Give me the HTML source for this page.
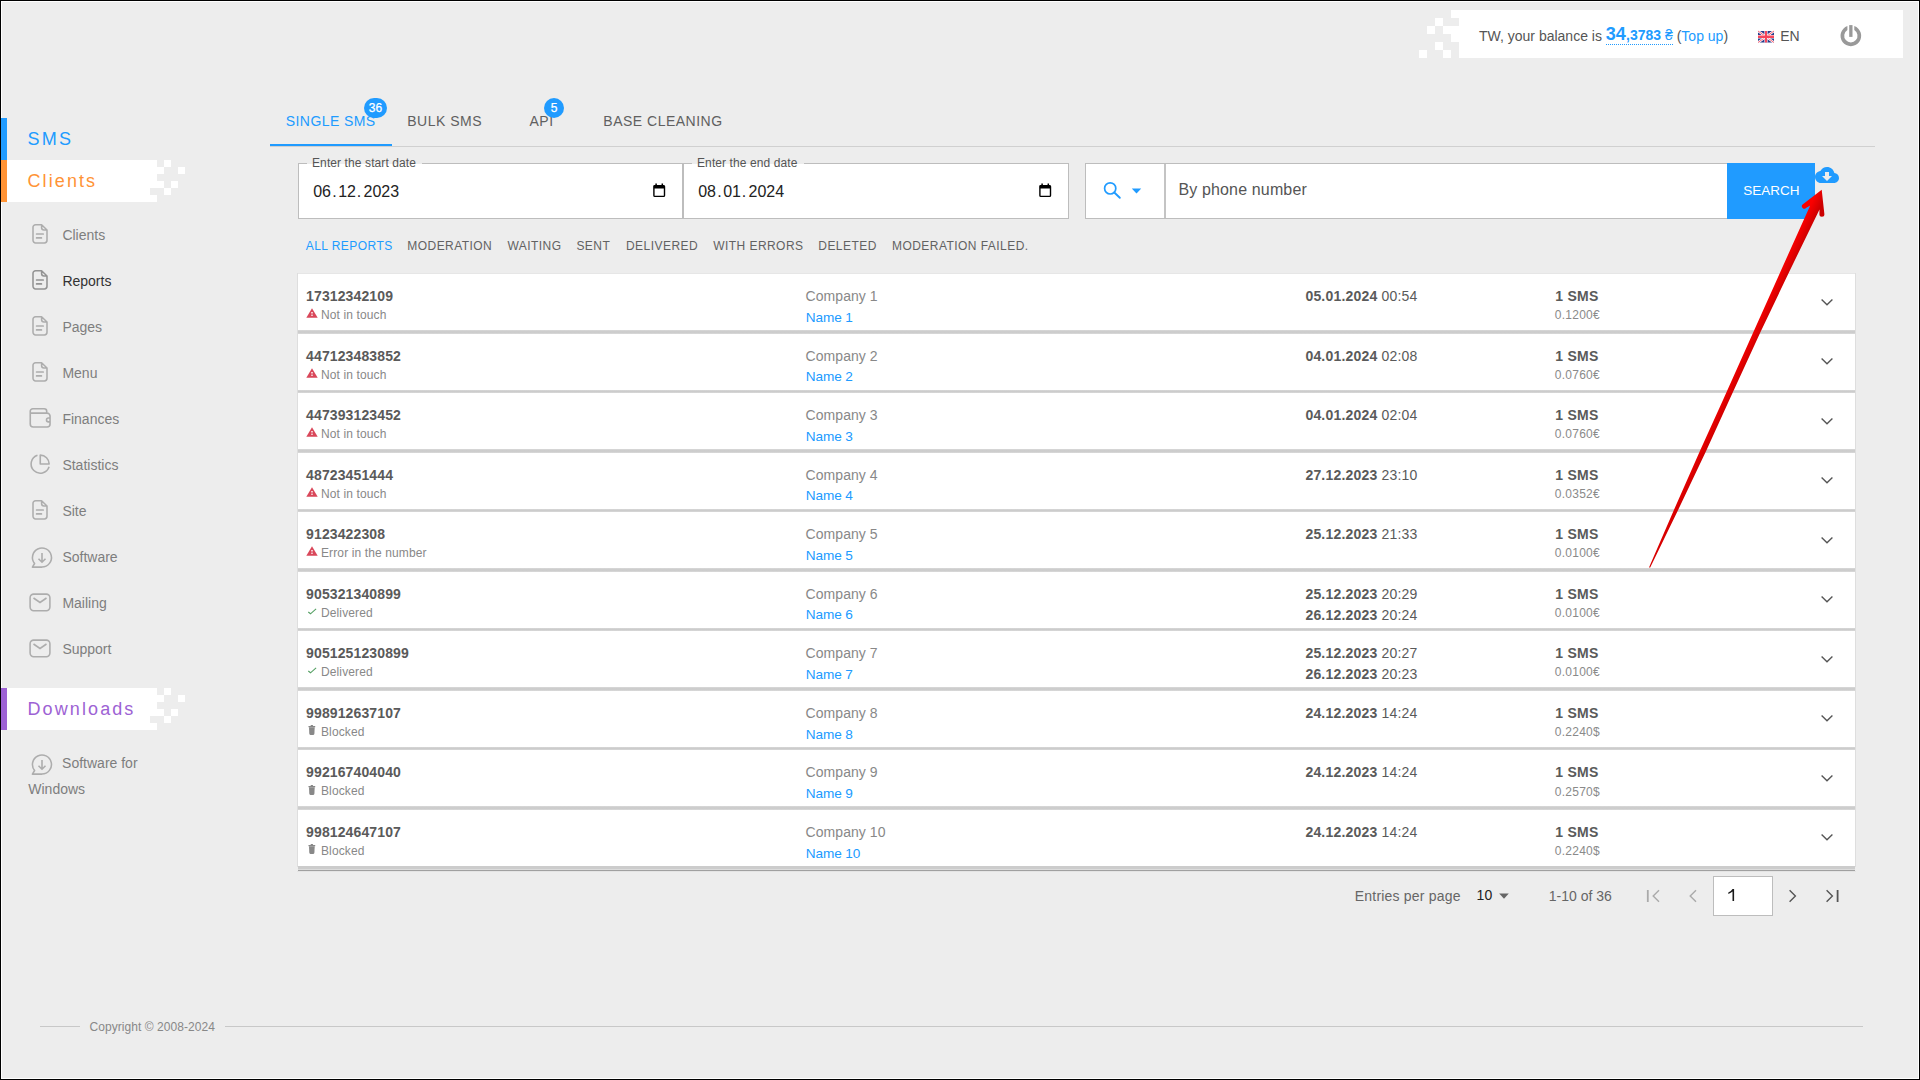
<!DOCTYPE html>
<html><head><meta charset="utf-8"><title>Reports</title>
<style>
*{box-sizing:border-box;margin:0;padding:0}
html,body{width:1920px;height:1080px;overflow:hidden;background:#000}
body{font-family:"Liberation Sans",sans-serif;position:relative}
.t{position:absolute;white-space:nowrap}
.r{position:absolute}
svg{position:absolute;overflow:visible}
</style></head><body>
<div class="r" style="left:1px;top:1px;width:1918px;height:1078px;background:#fff;"></div>
<div class="r" style="left:2px;top:2px;width:1916px;height:1076px;background:#ededed;"></div>
<div class="r" style="left:1459px;top:10px;width:444px;height:48px;background:#fff;"></div>
<div class="r" style="left:1451px;top:10px;width:8px;height:8px;background:#fff;"></div>
<div class="r" style="left:1435px;top:18px;width:8px;height:8px;background:#fff;"></div>
<div class="r" style="left:1427px;top:26px;width:8px;height:8px;background:#fff;"></div>
<div class="r" style="left:1443px;top:26px;width:8px;height:8px;background:#fff;"></div>
<div class="r" style="left:1451px;top:26px;width:8px;height:8px;background:#fff;"></div>
<div class="r" style="left:1451px;top:34px;width:8px;height:8px;background:#fff;"></div>
<div class="r" style="left:1435px;top:42px;width:8px;height:8px;background:#fff;"></div>
<div class="r" style="left:1419px;top:50px;width:8px;height:8px;background:#fff;"></div>
<div class="r" style="left:1443px;top:50px;width:8px;height:8px;background:#fff;"></div>
<div class="t" style="left:1479.00px;top:28.95px;font-size:14px;line-height:14px;color:#555;">TW, your balance is</div>
<div class="r" style="left:1606px;top:44px;width:67px;height:0;border-top:1px dotted rgb(32,155,255)"></div>
<div class="t" style="left:1605.80px;top:24.76px;font-size:18px;line-height:18px;color:rgb(32,155,255);font-weight:bold">34</div>
<div class="t" style="left:1626.00px;top:28.15px;font-size:14px;line-height:14px;color:rgb(32,155,255);font-weight:bold">,3783 <span style="font-weight:normal">₴</span></div>
<div class="t" style="left:1676.70px;top:28.95px;font-size:14px;line-height:14px;color:#555;">(<span style="color:rgb(32,155,255)">Top up</span>)</div>
<svg style="left:1758px;top:31.3px" width="16" height="11.5" viewBox="0 0 60 40" preserveAspectRatio="none">
<rect width="60" height="40" fill="#283c8c"/>
<path d="M0,0 L60,40 M60,0 L0,40" stroke="#fff" stroke-width="8"/>
<path d="M0,0 L60,40 M60,0 L0,40" stroke="#f5455a" stroke-width="3"/>
<path d="M30,0 V40 M0,20 H60" stroke="#fff" stroke-width="12"/>
<path d="M30,0 V40 M0,20 H60" stroke="#f5455a" stroke-width="8"/>
</svg>
<div class="t" style="left:1780.20px;top:28.95px;font-size:14px;line-height:14px;color:#555;">EN</div>
<svg style="left:1840px;top:25px" width="22" height="22" viewBox="0 0 22 22">
<path d="M7.4 1.04 A10.35 10.35 0 1 0 14.3 1.04 L14.3 5.12 A6.65 6.65 0 1 1 7.4 5.12 Z" fill="#999"/>
<rect x="9.2" y="0.1" width="3.3" height="11.8" fill="#999"/>
</svg>
<div class="r" style="left:1px;top:118px;width:6px;height:42px;background:rgb(32,155,255);"></div>
<div class="t" style="left:27.50px;top:129.76px;font-size:18px;line-height:18px;color:rgb(32,155,255);letter-spacing:2.3px">SMS</div>
<div class="r" style="left:7px;top:160px;width:143px;height:42px;background:#fff;"></div>
<div class="r" style="left:150px;top:160px;width:7px;height:7px;background:#fff;"></div>
<div class="r" style="left:164px;top:160px;width:7px;height:7px;background:#fff;"></div>
<div class="r" style="left:150px;top:167px;width:7px;height:7px;background:#fff;"></div>
<div class="r" style="left:157px;top:167px;width:7px;height:7px;background:#fff;"></div>
<div class="r" style="left:178px;top:167px;width:7px;height:7px;background:#fff;"></div>
<div class="r" style="left:150px;top:174px;width:7px;height:7px;background:#fff;"></div>
<div class="r" style="left:150px;top:181px;width:7px;height:7px;background:#fff;"></div>
<div class="r" style="left:157px;top:181px;width:7px;height:7px;background:#fff;"></div>
<div class="r" style="left:171px;top:181px;width:7px;height:7px;background:#fff;"></div>
<div class="r" style="left:164px;top:188px;width:7px;height:7px;background:#fff;"></div>
<div class="r" style="left:150px;top:195px;width:7px;height:7px;background:#fff;"></div>
<div class="r" style="left:1px;top:160px;width:6px;height:42px;background:#ff9335;"></div>
<div class="t" style="left:27.50px;top:171.76px;font-size:18px;line-height:18px;color:#ff9335;letter-spacing:2.1px">Clients</div>
<div class="r" style="left:7px;top:688px;width:143px;height:42px;background:#fff;"></div>
<div class="r" style="left:150px;top:688px;width:7px;height:7px;background:#fff;"></div>
<div class="r" style="left:164px;top:688px;width:7px;height:7px;background:#fff;"></div>
<div class="r" style="left:150px;top:695px;width:7px;height:7px;background:#fff;"></div>
<div class="r" style="left:157px;top:695px;width:7px;height:7px;background:#fff;"></div>
<div class="r" style="left:178px;top:695px;width:7px;height:7px;background:#fff;"></div>
<div class="r" style="left:150px;top:702px;width:7px;height:7px;background:#fff;"></div>
<div class="r" style="left:150px;top:709px;width:7px;height:7px;background:#fff;"></div>
<div class="r" style="left:157px;top:709px;width:7px;height:7px;background:#fff;"></div>
<div class="r" style="left:171px;top:709px;width:7px;height:7px;background:#fff;"></div>
<div class="r" style="left:164px;top:716px;width:7px;height:7px;background:#fff;"></div>
<div class="r" style="left:150px;top:723px;width:7px;height:7px;background:#fff;"></div>
<div class="r" style="left:1px;top:688px;width:6px;height:42px;background:#9d62d4;"></div>
<div class="t" style="left:27.50px;top:699.76px;font-size:18px;line-height:18px;color:#9d62d4;letter-spacing:2.1px">Downloads</div>
<div class="t" style="left:62.40px;top:228.15px;font-size:14px;line-height:14px;color:#7e7e7e;">Clients</div>
<svg style="left:31px;top:223px" width="18" height="22" viewBox="0 0 18 22"><path d="M4.6 1.7 H10.6 L16 7.0 V17.3 A2.6 2.6 0 0 1 13.4 19.9 H4.6 A2.6 2.6 0 0 1 2 17.3 V4.3 A2.6 2.6 0 0 1 4.6 1.7 Z M10.6 1.7 V4.5 A2.4 2.4 0 0 0 13 6.9 H16" fill="none" stroke="#adadad" stroke-width="1.55" stroke-linejoin="round"/><path d="M5.6 11 H12.2 M5.6 14.9 H10.4" stroke="#adadad" stroke-width="1.7" stroke-linecap="round"/></svg>
<div class="t" style="left:62.40px;top:274.15px;font-size:14px;line-height:14px;color:#333;">Reports</div>
<svg style="left:31px;top:269px" width="18" height="22" viewBox="0 0 18 22"><path d="M4.6 1.7 H10.6 L16 7.0 V17.3 A2.6 2.6 0 0 1 13.4 19.9 H4.6 A2.6 2.6 0 0 1 2 17.3 V4.3 A2.6 2.6 0 0 1 4.6 1.7 Z M10.6 1.7 V4.5 A2.4 2.4 0 0 0 13 6.9 H16" fill="none" stroke="#939393" stroke-width="1.55" stroke-linejoin="round"/><path d="M5.6 11 H12.2 M5.6 14.9 H10.4" stroke="#939393" stroke-width="1.7" stroke-linecap="round"/></svg>
<div class="t" style="left:62.40px;top:320.15px;font-size:14px;line-height:14px;color:#7e7e7e;">Pages</div>
<svg style="left:31px;top:315px" width="18" height="22" viewBox="0 0 18 22"><path d="M4.6 1.7 H10.6 L16 7.0 V17.3 A2.6 2.6 0 0 1 13.4 19.9 H4.6 A2.6 2.6 0 0 1 2 17.3 V4.3 A2.6 2.6 0 0 1 4.6 1.7 Z M10.6 1.7 V4.5 A2.4 2.4 0 0 0 13 6.9 H16" fill="none" stroke="#adadad" stroke-width="1.55" stroke-linejoin="round"/><path d="M5.6 11 H12.2 M5.6 14.9 H10.4" stroke="#adadad" stroke-width="1.7" stroke-linecap="round"/></svg>
<div class="t" style="left:62.40px;top:366.15px;font-size:14px;line-height:14px;color:#7e7e7e;">Menu</div>
<svg style="left:31px;top:361px" width="18" height="22" viewBox="0 0 18 22"><path d="M4.6 1.7 H10.6 L16 7.0 V17.3 A2.6 2.6 0 0 1 13.4 19.9 H4.6 A2.6 2.6 0 0 1 2 17.3 V4.3 A2.6 2.6 0 0 1 4.6 1.7 Z M10.6 1.7 V4.5 A2.4 2.4 0 0 0 13 6.9 H16" fill="none" stroke="#adadad" stroke-width="1.55" stroke-linejoin="round"/><path d="M5.6 11 H12.2 M5.6 14.9 H10.4" stroke="#adadad" stroke-width="1.7" stroke-linecap="round"/></svg>
<div class="t" style="left:62.40px;top:412.15px;font-size:14px;line-height:14px;color:#7e7e7e;">Finances</div>
<svg style="left:29px;top:407px" width="23" height="22" viewBox="0 0 23 22"><path d="M1.25 6.1 V4.3 A2.55 2.55 0 0 1 3.8 1.75 H15.2 A2.5 2.5 0 0 1 17.7 4.25 V6.1 M1.25 4.3 V17.05 A3 3 0 0 0 4.25 20.05 H18.05 A3 3 0 0 0 21.05 17.05 V9.1 A3 3 0 0 0 18.05 6.1 H1.25 M21.05 11 H19.45 A1.95 1.95 0 0 0 19.45 14.9 H21.05" fill="none" stroke="#adadad" stroke-width="1.6" stroke-linejoin="round"/></svg>
<div class="t" style="left:62.40px;top:458.15px;font-size:14px;line-height:14px;color:#7e7e7e;">Statistics</div>
<svg style="left:29px;top:453px" width="22" height="22" viewBox="0 0 22 22"><path d="M8.46 2.25 A9.2 9.2 0 1 0 20.08 13.75" fill="none" stroke="#adadad" stroke-width="1.6"/><path d="M11.25 2.15 V11.05 H20.15 A8.9 8.9 0 0 0 11.25 2.15 Z" fill="none" stroke="#adadad" stroke-width="1.6" stroke-linejoin="round"/></svg>
<div class="t" style="left:62.40px;top:504.15px;font-size:14px;line-height:14px;color:#7e7e7e;">Site</div>
<svg style="left:31px;top:499px" width="18" height="22" viewBox="0 0 18 22"><path d="M4.6 1.7 H10.6 L16 7.0 V17.3 A2.6 2.6 0 0 1 13.4 19.9 H4.6 A2.6 2.6 0 0 1 2 17.3 V4.3 A2.6 2.6 0 0 1 4.6 1.7 Z M10.6 1.7 V4.5 A2.4 2.4 0 0 0 13 6.9 H16" fill="none" stroke="#adadad" stroke-width="1.55" stroke-linejoin="round"/><path d="M5.6 11 H12.2 M5.6 14.9 H10.4" stroke="#adadad" stroke-width="1.7" stroke-linecap="round"/></svg>
<div class="t" style="left:62.40px;top:550.15px;font-size:14px;line-height:14px;color:#7e7e7e;">Software</div>
<svg style="left:31px;top:547px" width="23" height="23" viewBox="0 0 23 23"><path d="M11 20 A9.5 9.5 0 1 0 3.6 16.5 L1.4 20.1 H11 Z" fill="none" stroke="#adadad" stroke-width="1.55" stroke-linejoin="round"/><path d="M11 6 V15 M7.5 11.7 L11 15.2 L14.5 11.7" fill="none" stroke="#adadad" stroke-width="1.6"/></svg>
<div class="t" style="left:62.40px;top:596.15px;font-size:14px;line-height:14px;color:#7e7e7e;">Mailing</div>
<svg style="left:29px;top:592.8px" width="22" height="19" viewBox="0 0 22 19"><rect x="1.1" y="1.1" width="19.8" height="16.6" rx="3.6" fill="none" stroke="#adadad" stroke-width="1.55"/><path d="M4.5 5 L11 9.5 L17.5 5" fill="none" stroke="#adadad" stroke-width="1.55"/></svg>
<div class="t" style="left:62.40px;top:642.15px;font-size:14px;line-height:14px;color:#7e7e7e;">Support</div>
<svg style="left:29px;top:638.8px" width="22" height="19" viewBox="0 0 22 19"><rect x="1.1" y="1.1" width="19.8" height="16.6" rx="3.6" fill="none" stroke="#adadad" stroke-width="1.55"/><path d="M4.5 5 L11 9.5 L17.5 5" fill="none" stroke="#adadad" stroke-width="1.55"/></svg>
<div class="t" style="left:62.10px;top:755.95px;font-size:14px;line-height:14px;color:#7e7e7e;">Software for</div>
<div class="t" style="left:28.30px;top:782.45px;font-size:14px;line-height:14px;color:#7e7e7e;">Windows</div>
<svg style="left:31px;top:753.7px" width="23" height="23" viewBox="0 0 23 23"><path d="M11 20 A9.5 9.5 0 1 0 3.6 16.5 L1.4 20.1 H11 Z" fill="none" stroke="#adadad" stroke-width="1.55" stroke-linejoin="round"/><path d="M11 6 V15 M7.5 11.7 L11 15.2 L14.5 11.7" fill="none" stroke="#adadad" stroke-width="1.6"/></svg>
<div class="r" style="left:270px;top:146px;width:1605px;height:1px;background:#d0d0d0;"></div>
<div class="r" style="left:270px;top:144px;width:122px;height:2px;background:rgb(32,155,255);"></div>
<div class="t" style="left:285.80px;top:113.85px;font-size:14px;line-height:14px;color:rgb(32,155,255);letter-spacing:0.42px">SINGLE SMS</div>
<div class="t" style="left:407.20px;top:113.85px;font-size:14px;line-height:14px;color:#606060;letter-spacing:0.5px">BULK SMS</div>
<div class="t" style="left:529.50px;top:113.85px;font-size:14px;line-height:14px;color:#606060;letter-spacing:0.5px">API</div>
<div class="t" style="left:603.30px;top:113.85px;font-size:14px;line-height:14px;color:#606060;letter-spacing:0.5px">BASE CLEANING</div>
<div class="r" style="left:364px;top:98px;width:23px;height:20px;border-radius:10px;background:rgb(32,155,255)"></div>
<div class="t" style="left:364px;top:98px;width:23px;height:20px;line-height:20px;text-align:center;font-size:12px;color:#fff;-webkit-text-stroke:0.25px #fff">36</div>
<div class="r" style="left:544px;top:98px;width:20px;height:20px;border-radius:10px;background:rgb(32,155,255)"></div>
<div class="t" style="left:544px;top:98px;width:20px;height:20px;line-height:20px;text-align:center;font-size:12px;color:#fff;-webkit-text-stroke:0.25px #fff">5</div>
<div class="r" style="left:298px;top:163px;width:385px;height:56px;background:#fff;border:1px solid #bdbdbd"></div>
<div class="r" style="left:307px;top:161px;width:115px;height:4px;background:#ededed;"></div>
<div class="r" style="left:307px;top:163px;width:115px;height:2px;background:linear-gradient(#ededed 0,#ededed 1px,#fff 1px);"></div>
<div class="t" style="left:312.00px;top:156.74px;font-size:12px;line-height:12px;color:#555;letter-spacing:0.1px">Enter the start date</div>
<div class="t" style="left:313.2px;top:183.56px;font-size:16px;line-height:16px;color:#222">06<span style="margin:0 1.5px 0 1.2px">.</span>12<span style="margin:0 2.4px 0 0.8px">.</span>2023</div>
<svg style="left:653px;top:183px" width="13" height="15" viewBox="0 0 13 15"><path d="M3.1 0.5 V3 M9.3 0.5 V3" stroke="#000" stroke-width="1.5"/><rect x="0.9" y="2.6" width="10.6" height="10.8" rx="0.9" fill="none" stroke="#000" stroke-width="1.4"/><rect x="0.9" y="2.6" width="10.6" height="2.9" fill="#000"/></svg>
<div class="r" style="left:683px;top:163px;width:386px;height:56px;background:#fff;border:1px solid #bdbdbd"></div>
<div class="r" style="left:692px;top:161px;width:112px;height:4px;background:#ededed;"></div>
<div class="r" style="left:692px;top:163px;width:112px;height:2px;background:linear-gradient(#ededed 0,#ededed 1px,#fff 1px);"></div>
<div class="t" style="left:697.00px;top:156.74px;font-size:12px;line-height:12px;color:#555;letter-spacing:0.1px">Enter the end date</div>
<div class="t" style="left:698.2px;top:183.56px;font-size:16px;line-height:16px;color:#222">08<span style="margin:0 1.5px 0 1.2px">.</span>01<span style="margin:0 2.4px 0 0.8px">.</span>2024</div>
<svg style="left:1039px;top:183px" width="13" height="15" viewBox="0 0 13 15"><path d="M3.1 0.5 V3 M9.3 0.5 V3" stroke="#000" stroke-width="1.5"/><rect x="0.9" y="2.6" width="10.6" height="10.8" rx="0.9" fill="none" stroke="#000" stroke-width="1.4"/><rect x="0.9" y="2.6" width="10.6" height="2.9" fill="#000"/></svg>
<div class="r" style="left:1085px;top:163px;width:643px;height:56px;background:#fff;border:1px solid #bdbdbd"></div>
<div class="r" style="left:1164px;top:164px;width:2px;height:54px;background:#c4c4c4;"></div>
<svg style="left:1100px;top:180px" width="24" height="22" viewBox="0 0 24 22">
<circle cx="10.2" cy="8.4" r="5.6" fill="none" stroke="rgb(32,155,255)" stroke-width="1.7"/>
<path d="M14.3 12.5 L19.8 17.8" stroke="rgb(32,155,255)" stroke-width="1.9" stroke-linecap="round"/>
</svg>
<svg style="left:1131px;top:188px" width="11" height="6" viewBox="0 0 11 6"><path d="M0.8 0.6 H10.2 L5.5 5.6 Z" fill="rgb(32,155,255)"/></svg>
<div class="t" style="left:1178.40px;top:182.26px;font-size:16px;line-height:16px;color:#555;letter-spacing:0.15px">By phone number</div>
<div class="r" style="left:1727px;top:163px;width:88px;height:56px;background:rgb(32,155,255);"></div>
<div class="t" style="left:1743.20px;top:183.57px;font-size:13.5px;line-height:13.5px;color:#fff;">SEARCH</div>
<svg style="left:1815px;top:163px" width="24" height="24" viewBox="0 0 24 24"><path fill="rgb(32,155,255)" d="M19.35 10.04C18.67 6.59 15.64 4 12 4 9.11 4 6.6 5.64 5.35 8.04 2.34 8.36 0 10.91 0 14c0 3.31 2.69 6 6 6h13c2.76 0 5-2.24 5-5 0-2.64-2.05-4.78-4.65-4.96zM17 13l-5 5-5-5h3V9h4v4h3z"/></svg>
<div class="t" style="left:305.70px;top:239.84px;font-size:12px;line-height:12px;color:rgb(32,155,255);letter-spacing:0.45px">ALL REPORTS</div>
<div class="t" style="left:407.30px;top:239.84px;font-size:12px;line-height:12px;color:#626262;letter-spacing:0.45px">MODERATION</div>
<div class="t" style="left:507.40px;top:239.84px;font-size:12px;line-height:12px;color:#626262;letter-spacing:0.45px">WAITING</div>
<div class="t" style="left:576.40px;top:239.84px;font-size:12px;line-height:12px;color:#626262;letter-spacing:0.45px">SENT</div>
<div class="t" style="left:626.00px;top:239.84px;font-size:12px;line-height:12px;color:#626262;letter-spacing:0.45px">DELIVERED</div>
<div class="t" style="left:713.20px;top:239.84px;font-size:12px;line-height:12px;color:#626262;letter-spacing:0.45px">WITH ERRORS</div>
<div class="t" style="left:818.30px;top:239.84px;font-size:12px;line-height:12px;color:#626262;letter-spacing:0.45px">DELETED</div>
<div class="t" style="left:892.00px;top:239.84px;font-size:12px;line-height:12px;color:#626262;letter-spacing:0.45px">MODERATION FAILED.</div>
<div class="r" style="left:297px;top:273px;width:1559px;height:594px;background:#dedede;"></div>
<div class="r" style="left:298px;top:273px;width:1557px;height:1px;background:#e6e6e6;"></div>
<div class="r" style="left:298px;top:330px;width:1557px;height:4px;background:linear-gradient(#d9d9d9,#cccccc 40%,#cccccc 60%,#dadada)"></div>
<div class="r" style="left:298px;top:274px;width:1557px;height:56px;background:#fff;"></div>
<div class="t" style="left:306.10px;top:289.05px;font-size:14px;line-height:14px;color:#5a5a5a;font-weight:bold;letter-spacing:0.12px">17312342109</div>
<div class="t" style="left:321.00px;top:308.99px;font-size:12px;line-height:12px;color:#888;letter-spacing:0.12px">Not in touch</div>
<svg style="left:306px;top:308.00px" width="12" height="10" viewBox="0 0 12 10"><path d="M6 0.3 L11.7 9.8 H0.3 Z" fill="#d9475a"/><rect x="5.3" y="4" width="1.4" height="1.5" fill="#fff"/><rect x="5.3" y="6.6" width="1.4" height="1.3" fill="#fff"/></svg>
<div class="t" style="left:805.60px;top:289.05px;font-size:14px;line-height:14px;color:#888;letter-spacing:0.05px">Company 1</div>
<div class="t" style="left:805.80px;top:310.69px;font-size:13.6px;line-height:13.6px;color:rgb(32,155,255);letter-spacing:-0.1px">Name 1</div>
<div class="t" style="left:1305.40px;top:289.05px;font-size:14px;line-height:14px;color:#5a5a5a;letter-spacing:0.2px"><b>05.01.2024</b> 00:54</div>
<div class="t" style="left:1555.20px;top:288.95px;font-size:14px;line-height:14px;color:#5a5a5a;font-weight:bold;letter-spacing:0.3px">1 SMS</div>
<div class="t" style="left:1554.80px;top:309.14px;font-size:12px;line-height:12px;color:#8a8a8a;letter-spacing:0.25px">0.1200€</div>
<svg style="left:1820px;top:297.50px" width="14" height="9" viewBox="0 0 14 9"><path d="M1.6 1.5 L7 6.8 L12.4 1.5" fill="none" stroke="#555" stroke-width="1.4"/></svg>
<div class="r" style="left:298px;top:390px;width:1557px;height:3px;background:linear-gradient(#d9d9d9,#cccccc 40%,#cccccc 60%,#dadada)"></div>
<div class="r" style="left:298px;top:334px;width:1557px;height:56px;background:#fff;"></div>
<div class="t" style="left:306.10px;top:348.60px;font-size:14px;line-height:14px;color:#5a5a5a;font-weight:bold;letter-spacing:0.12px">447123483852</div>
<div class="t" style="left:321.00px;top:368.54px;font-size:12px;line-height:12px;color:#888;letter-spacing:0.12px">Not in touch</div>
<svg style="left:306px;top:367.55px" width="12" height="10" viewBox="0 0 12 10"><path d="M6 0.3 L11.7 9.8 H0.3 Z" fill="#d9475a"/><rect x="5.3" y="4" width="1.4" height="1.5" fill="#fff"/><rect x="5.3" y="6.6" width="1.4" height="1.3" fill="#fff"/></svg>
<div class="t" style="left:805.60px;top:348.60px;font-size:14px;line-height:14px;color:#888;letter-spacing:0.05px">Company 2</div>
<div class="t" style="left:805.80px;top:370.24px;font-size:13.6px;line-height:13.6px;color:rgb(32,155,255);letter-spacing:-0.1px">Name 2</div>
<div class="t" style="left:1305.40px;top:348.60px;font-size:14px;line-height:14px;color:#5a5a5a;letter-spacing:0.2px"><b>04.01.2024</b> 02:08</div>
<div class="t" style="left:1555.20px;top:348.50px;font-size:14px;line-height:14px;color:#5a5a5a;font-weight:bold;letter-spacing:0.3px">1 SMS</div>
<div class="t" style="left:1554.80px;top:368.69px;font-size:12px;line-height:12px;color:#8a8a8a;letter-spacing:0.25px">0.0760€</div>
<svg style="left:1820px;top:357.05px" width="14" height="9" viewBox="0 0 14 9"><path d="M1.6 1.5 L7 6.8 L12.4 1.5" fill="none" stroke="#555" stroke-width="1.4"/></svg>
<div class="r" style="left:298px;top:449px;width:1557px;height:4px;background:linear-gradient(#d9d9d9,#cccccc 40%,#cccccc 60%,#dadada)"></div>
<div class="r" style="left:298px;top:393px;width:1557px;height:56px;background:#fff;"></div>
<div class="t" style="left:306.10px;top:408.15px;font-size:14px;line-height:14px;color:#5a5a5a;font-weight:bold;letter-spacing:0.12px">447393123452</div>
<div class="t" style="left:321.00px;top:428.09px;font-size:12px;line-height:12px;color:#888;letter-spacing:0.12px">Not in touch</div>
<svg style="left:306px;top:427.10px" width="12" height="10" viewBox="0 0 12 10"><path d="M6 0.3 L11.7 9.8 H0.3 Z" fill="#d9475a"/><rect x="5.3" y="4" width="1.4" height="1.5" fill="#fff"/><rect x="5.3" y="6.6" width="1.4" height="1.3" fill="#fff"/></svg>
<div class="t" style="left:805.60px;top:408.15px;font-size:14px;line-height:14px;color:#888;letter-spacing:0.05px">Company 3</div>
<div class="t" style="left:805.80px;top:429.79px;font-size:13.6px;line-height:13.6px;color:rgb(32,155,255);letter-spacing:-0.1px">Name 3</div>
<div class="t" style="left:1305.40px;top:408.15px;font-size:14px;line-height:14px;color:#5a5a5a;letter-spacing:0.2px"><b>04.01.2024</b> 02:04</div>
<div class="t" style="left:1555.20px;top:408.05px;font-size:14px;line-height:14px;color:#5a5a5a;font-weight:bold;letter-spacing:0.3px">1 SMS</div>
<div class="t" style="left:1554.80px;top:428.24px;font-size:12px;line-height:12px;color:#8a8a8a;letter-spacing:0.25px">0.0760€</div>
<svg style="left:1820px;top:416.60px" width="14" height="9" viewBox="0 0 14 9"><path d="M1.6 1.5 L7 6.8 L12.4 1.5" fill="none" stroke="#555" stroke-width="1.4"/></svg>
<div class="r" style="left:298px;top:509px;width:1557px;height:3px;background:linear-gradient(#d9d9d9,#cccccc 40%,#cccccc 60%,#dadada)"></div>
<div class="r" style="left:298px;top:453px;width:1557px;height:56px;background:#fff;"></div>
<div class="t" style="left:306.10px;top:467.70px;font-size:14px;line-height:14px;color:#5a5a5a;font-weight:bold;letter-spacing:0.12px">48723451444</div>
<div class="t" style="left:321.00px;top:487.64px;font-size:12px;line-height:12px;color:#888;letter-spacing:0.12px">Not in touch</div>
<svg style="left:306px;top:486.65px" width="12" height="10" viewBox="0 0 12 10"><path d="M6 0.3 L11.7 9.8 H0.3 Z" fill="#d9475a"/><rect x="5.3" y="4" width="1.4" height="1.5" fill="#fff"/><rect x="5.3" y="6.6" width="1.4" height="1.3" fill="#fff"/></svg>
<div class="t" style="left:805.60px;top:467.70px;font-size:14px;line-height:14px;color:#888;letter-spacing:0.05px">Company 4</div>
<div class="t" style="left:805.80px;top:489.34px;font-size:13.6px;line-height:13.6px;color:rgb(32,155,255);letter-spacing:-0.1px">Name 4</div>
<div class="t" style="left:1305.40px;top:467.70px;font-size:14px;line-height:14px;color:#5a5a5a;letter-spacing:0.2px"><b>27.12.2023</b> 23:10</div>
<div class="t" style="left:1555.20px;top:467.60px;font-size:14px;line-height:14px;color:#5a5a5a;font-weight:bold;letter-spacing:0.3px">1 SMS</div>
<div class="t" style="left:1554.80px;top:487.79px;font-size:12px;line-height:12px;color:#8a8a8a;letter-spacing:0.25px">0.0352€</div>
<svg style="left:1820px;top:476.15px" width="14" height="9" viewBox="0 0 14 9"><path d="M1.6 1.5 L7 6.8 L12.4 1.5" fill="none" stroke="#555" stroke-width="1.4"/></svg>
<div class="r" style="left:298px;top:568px;width:1557px;height:4px;background:linear-gradient(#d9d9d9,#cccccc 40%,#cccccc 60%,#dadada)"></div>
<div class="r" style="left:298px;top:512px;width:1557px;height:56px;background:#fff;"></div>
<div class="t" style="left:306.10px;top:527.25px;font-size:14px;line-height:14px;color:#5a5a5a;font-weight:bold;letter-spacing:0.12px">9123422308</div>
<div class="t" style="left:321.00px;top:547.19px;font-size:12px;line-height:12px;color:#888;letter-spacing:0.12px">Error in the number</div>
<svg style="left:306px;top:546.20px" width="12" height="10" viewBox="0 0 12 10"><path d="M6 0.3 L11.7 9.8 H0.3 Z" fill="#d9475a"/><rect x="5.3" y="4" width="1.4" height="1.5" fill="#fff"/><rect x="5.3" y="6.6" width="1.4" height="1.3" fill="#fff"/></svg>
<div class="t" style="left:805.60px;top:527.25px;font-size:14px;line-height:14px;color:#888;letter-spacing:0.05px">Company 5</div>
<div class="t" style="left:805.80px;top:548.89px;font-size:13.6px;line-height:13.6px;color:rgb(32,155,255);letter-spacing:-0.1px">Name 5</div>
<div class="t" style="left:1305.40px;top:527.25px;font-size:14px;line-height:14px;color:#5a5a5a;letter-spacing:0.2px"><b>25.12.2023</b> 21:33</div>
<div class="t" style="left:1555.20px;top:527.15px;font-size:14px;line-height:14px;color:#5a5a5a;font-weight:bold;letter-spacing:0.3px">1 SMS</div>
<div class="t" style="left:1554.80px;top:547.34px;font-size:12px;line-height:12px;color:#8a8a8a;letter-spacing:0.25px">0.0100€</div>
<svg style="left:1820px;top:535.70px" width="14" height="9" viewBox="0 0 14 9"><path d="M1.6 1.5 L7 6.8 L12.4 1.5" fill="none" stroke="#555" stroke-width="1.4"/></svg>
<div class="r" style="left:298px;top:628px;width:1557px;height:3px;background:linear-gradient(#d9d9d9,#cccccc 40%,#cccccc 60%,#dadada)"></div>
<div class="r" style="left:298px;top:572px;width:1557px;height:56px;background:#fff;"></div>
<div class="t" style="left:306.10px;top:586.80px;font-size:14px;line-height:14px;color:#5a5a5a;font-weight:bold;letter-spacing:0.12px">905321340899</div>
<div class="t" style="left:321.00px;top:606.74px;font-size:12px;line-height:12px;color:#888;letter-spacing:0.12px">Delivered</div>
<svg style="left:307px;top:607.50px" width="10" height="7" viewBox="0 0 10 7"><path d="M1.3 4.0 L3.5 5.8 L9.1 0.8" fill="none" stroke="#55a064" stroke-width="1.1"/></svg>
<div class="t" style="left:805.60px;top:586.80px;font-size:14px;line-height:14px;color:#888;letter-spacing:0.05px">Company 6</div>
<div class="t" style="left:805.80px;top:608.44px;font-size:13.6px;line-height:13.6px;color:rgb(32,155,255);letter-spacing:-0.1px">Name 6</div>
<div class="t" style="left:1305.40px;top:586.80px;font-size:14px;line-height:14px;color:#5a5a5a;letter-spacing:0.2px"><b>25.12.2023</b> 20:29</div>
<div class="t" style="left:1305.40px;top:607.80px;font-size:14px;line-height:14px;color:#5a5a5a;letter-spacing:0.2px"><b>26.12.2023</b> 20:24</div>
<div class="t" style="left:1555.20px;top:586.70px;font-size:14px;line-height:14px;color:#5a5a5a;font-weight:bold;letter-spacing:0.3px">1 SMS</div>
<div class="t" style="left:1554.80px;top:606.89px;font-size:12px;line-height:12px;color:#8a8a8a;letter-spacing:0.25px">0.0100€</div>
<svg style="left:1820px;top:595.25px" width="14" height="9" viewBox="0 0 14 9"><path d="M1.6 1.5 L7 6.8 L12.4 1.5" fill="none" stroke="#555" stroke-width="1.4"/></svg>
<div class="r" style="left:298px;top:687px;width:1557px;height:4px;background:linear-gradient(#d9d9d9,#cccccc 40%,#cccccc 60%,#dadada)"></div>
<div class="r" style="left:298px;top:631px;width:1557px;height:56px;background:#fff;"></div>
<div class="t" style="left:306.10px;top:646.35px;font-size:14px;line-height:14px;color:#5a5a5a;font-weight:bold;letter-spacing:0.12px">9051251230899</div>
<div class="t" style="left:321.00px;top:666.29px;font-size:12px;line-height:12px;color:#888;letter-spacing:0.12px">Delivered</div>
<svg style="left:307px;top:667.05px" width="10" height="7" viewBox="0 0 10 7"><path d="M1.3 4.0 L3.5 5.8 L9.1 0.8" fill="none" stroke="#55a064" stroke-width="1.1"/></svg>
<div class="t" style="left:805.60px;top:646.35px;font-size:14px;line-height:14px;color:#888;letter-spacing:0.05px">Company 7</div>
<div class="t" style="left:805.80px;top:667.99px;font-size:13.6px;line-height:13.6px;color:rgb(32,155,255);letter-spacing:-0.1px">Name 7</div>
<div class="t" style="left:1305.40px;top:646.35px;font-size:14px;line-height:14px;color:#5a5a5a;letter-spacing:0.2px"><b>25.12.2023</b> 20:27</div>
<div class="t" style="left:1305.40px;top:667.35px;font-size:14px;line-height:14px;color:#5a5a5a;letter-spacing:0.2px"><b>26.12.2023</b> 20:23</div>
<div class="t" style="left:1555.20px;top:646.25px;font-size:14px;line-height:14px;color:#5a5a5a;font-weight:bold;letter-spacing:0.3px">1 SMS</div>
<div class="t" style="left:1554.80px;top:666.44px;font-size:12px;line-height:12px;color:#8a8a8a;letter-spacing:0.25px">0.0100€</div>
<svg style="left:1820px;top:654.80px" width="14" height="9" viewBox="0 0 14 9"><path d="M1.6 1.5 L7 6.8 L12.4 1.5" fill="none" stroke="#555" stroke-width="1.4"/></svg>
<div class="r" style="left:298px;top:747px;width:1557px;height:3px;background:linear-gradient(#d9d9d9,#cccccc 40%,#cccccc 60%,#dadada)"></div>
<div class="r" style="left:298px;top:691px;width:1557px;height:56px;background:#fff;"></div>
<div class="t" style="left:306.10px;top:705.90px;font-size:14px;line-height:14px;color:#5a5a5a;font-weight:bold;letter-spacing:0.12px">998912637107</div>
<div class="t" style="left:321.00px;top:725.84px;font-size:12px;line-height:12px;color:#888;letter-spacing:0.12px">Blocked</div>
<svg style="left:308px;top:725.00px" width="8" height="10" viewBox="0 0 8 10"><rect x="0.4" y="0.9" width="6.9" height="1.3" rx="0.5" fill="#888"/><rect x="2.6" y="0" width="2.5" height="1.4" rx="0.6" fill="#888"/><path d="M1 2.3 H6.7 L6.4 8.8 Q6.3 9.9 5.3 9.9 H2.4 Q1.4 9.9 1.3 8.8 Z" fill="#888"/></svg>
<div class="t" style="left:805.60px;top:705.90px;font-size:14px;line-height:14px;color:#888;letter-spacing:0.05px">Company 8</div>
<div class="t" style="left:805.80px;top:727.54px;font-size:13.6px;line-height:13.6px;color:rgb(32,155,255);letter-spacing:-0.1px">Name 8</div>
<div class="t" style="left:1305.40px;top:705.90px;font-size:14px;line-height:14px;color:#5a5a5a;letter-spacing:0.2px"><b>24.12.2023</b> 14:24</div>
<div class="t" style="left:1555.20px;top:705.80px;font-size:14px;line-height:14px;color:#5a5a5a;font-weight:bold;letter-spacing:0.3px">1 SMS</div>
<div class="t" style="left:1554.80px;top:725.99px;font-size:12px;line-height:12px;color:#8a8a8a;letter-spacing:0.25px">0.2240$</div>
<svg style="left:1820px;top:714.35px" width="14" height="9" viewBox="0 0 14 9"><path d="M1.6 1.5 L7 6.8 L12.4 1.5" fill="none" stroke="#555" stroke-width="1.4"/></svg>
<div class="r" style="left:298px;top:806px;width:1557px;height:4px;background:linear-gradient(#d9d9d9,#cccccc 40%,#cccccc 60%,#dadada)"></div>
<div class="r" style="left:298px;top:750px;width:1557px;height:56px;background:#fff;"></div>
<div class="t" style="left:306.10px;top:765.45px;font-size:14px;line-height:14px;color:#5a5a5a;font-weight:bold;letter-spacing:0.12px">992167404040</div>
<div class="t" style="left:321.00px;top:785.39px;font-size:12px;line-height:12px;color:#888;letter-spacing:0.12px">Blocked</div>
<svg style="left:308px;top:784.55px" width="8" height="10" viewBox="0 0 8 10"><rect x="0.4" y="0.9" width="6.9" height="1.3" rx="0.5" fill="#888"/><rect x="2.6" y="0" width="2.5" height="1.4" rx="0.6" fill="#888"/><path d="M1 2.3 H6.7 L6.4 8.8 Q6.3 9.9 5.3 9.9 H2.4 Q1.4 9.9 1.3 8.8 Z" fill="#888"/></svg>
<div class="t" style="left:805.60px;top:765.45px;font-size:14px;line-height:14px;color:#888;letter-spacing:0.05px">Company 9</div>
<div class="t" style="left:805.80px;top:787.09px;font-size:13.6px;line-height:13.6px;color:rgb(32,155,255);letter-spacing:-0.1px">Name 9</div>
<div class="t" style="left:1305.40px;top:765.45px;font-size:14px;line-height:14px;color:#5a5a5a;letter-spacing:0.2px"><b>24.12.2023</b> 14:24</div>
<div class="t" style="left:1555.20px;top:765.35px;font-size:14px;line-height:14px;color:#5a5a5a;font-weight:bold;letter-spacing:0.3px">1 SMS</div>
<div class="t" style="left:1554.80px;top:785.54px;font-size:12px;line-height:12px;color:#8a8a8a;letter-spacing:0.25px">0.2570$</div>
<svg style="left:1820px;top:773.90px" width="14" height="9" viewBox="0 0 14 9"><path d="M1.6 1.5 L7 6.8 L12.4 1.5" fill="none" stroke="#555" stroke-width="1.4"/></svg>
<div class="r" style="left:298px;top:810px;width:1557px;height:56px;background:#fff;"></div>
<div class="t" style="left:306.10px;top:825.00px;font-size:14px;line-height:14px;color:#5a5a5a;font-weight:bold;letter-spacing:0.12px">998124647107</div>
<div class="t" style="left:321.00px;top:844.94px;font-size:12px;line-height:12px;color:#888;letter-spacing:0.12px">Blocked</div>
<svg style="left:308px;top:844.10px" width="8" height="10" viewBox="0 0 8 10"><rect x="0.4" y="0.9" width="6.9" height="1.3" rx="0.5" fill="#888"/><rect x="2.6" y="0" width="2.5" height="1.4" rx="0.6" fill="#888"/><path d="M1 2.3 H6.7 L6.4 8.8 Q6.3 9.9 5.3 9.9 H2.4 Q1.4 9.9 1.3 8.8 Z" fill="#888"/></svg>
<div class="t" style="left:805.60px;top:825.00px;font-size:14px;line-height:14px;color:#888;letter-spacing:0.05px">Company 10</div>
<div class="t" style="left:805.80px;top:846.64px;font-size:13.6px;line-height:13.6px;color:rgb(32,155,255);letter-spacing:-0.1px">Name 10</div>
<div class="t" style="left:1305.40px;top:825.00px;font-size:14px;line-height:14px;color:#5a5a5a;letter-spacing:0.2px"><b>24.12.2023</b> 14:24</div>
<div class="t" style="left:1555.20px;top:824.90px;font-size:14px;line-height:14px;color:#5a5a5a;font-weight:bold;letter-spacing:0.3px">1 SMS</div>
<div class="t" style="left:1554.80px;top:845.09px;font-size:12px;line-height:12px;color:#8a8a8a;letter-spacing:0.25px">0.2240$</div>
<svg style="left:1820px;top:833.45px" width="14" height="9" viewBox="0 0 14 9"><path d="M1.6 1.5 L7 6.8 L12.4 1.5" fill="none" stroke="#555" stroke-width="1.4"/></svg>
<div class="r" style="left:298px;top:866px;width:1557px;height:3px;background:#cccccc;"></div>
<div class="r" style="left:298px;top:869px;width:1557px;height:1px;background:#dcdcdc;"></div>
<div class="r" style="left:298px;top:870px;width:1557px;height:1px;background:#a0a0a0;"></div>
<div class="r" style="left:297px;top:871px;width:1559px;height:1px;background:#e4e4e4;"></div>
<div class="t" style="left:1354.80px;top:888.75px;font-size:14px;line-height:14px;color:#666;letter-spacing:0.2px">Entries per page</div>
<div class="t" style="left:1476.60px;top:888.05px;font-size:14px;line-height:14px;color:#222;">10</div>
<svg style="left:1499px;top:893px" width="10" height="6" viewBox="0 0 10 6"><path d="M0.2 0.5 H9.8 L5 5.7 Z" fill="#666"/></svg>
<div class="t" style="left:1548.80px;top:888.75px;font-size:14px;line-height:14px;color:#666;">1-10 of 36</div>
<svg style="left:1644px;top:888px" width="18" height="16" viewBox="0 0 18 16"><path d="M3.8 2 V14" stroke="#aaa" stroke-width="1.8"/><path d="M15 2.2 L9.2 8 L15 13.8" fill="none" stroke="#aaa" stroke-width="1.4"/></svg>
<svg style="left:1686px;top:888px" width="12" height="16" viewBox="0 0 12 16"><path d="M10 2.2 L4.2 8 L10 13.8" fill="none" stroke="#aaa" stroke-width="1.4"/></svg>
<div class="r" style="left:1713px;top:876px;width:60px;height:40px;background:#fff;border:1px solid #bdbdbd"></div>
<svg style="left:1726px;top:887px" width="10" height="16" viewBox="0 0 10 16"><path d="M6.5 2 H8.1 V14 H6.5 V4.6 Q5.2 5.8 2.3 6.9 V5.4 Q5.3 4.1 6.5 2 Z" fill="#1a1a1a"/></svg>
<svg style="left:1787px;top:888px" width="12" height="16" viewBox="0 0 12 16"><path d="M2.6 2.2 L8.4 8 L2.6 13.8" fill="none" stroke="#555" stroke-width="1.4"/></svg>
<svg style="left:1824px;top:888px" width="18" height="16" viewBox="0 0 18 16"><path d="M13.6 2 V14" stroke="#555" stroke-width="1.8"/><path d="M2.6 2.2 L8.4 8 L2.6 13.8" fill="none" stroke="#555" stroke-width="1.4"/></svg>
<div class="r" style="left:40px;top:1026px;width:40px;height:1px;background:#c8c8c8;"></div>
<div class="r" style="left:225px;top:1026px;width:1638px;height:1px;background:#c8c8c8;"></div>
<div class="t" style="left:89.60px;top:1021.09px;font-size:12px;line-height:12px;color:#888;letter-spacing:0.05px">Copyright © 2008-2024</div>
<svg style="left:0;top:0" width="1920" height="1080" viewBox="0 0 1920 1080"><defs><linearGradient id="ag" gradientUnits="userSpaceOnUse" x1="1804.5" y1="217.9" x2="1813.5" y2="222.1"><stop offset="0" stop-color="#fa0000"/><stop offset="1" stop-color="#cc0000"/></linearGradient></defs><path d="M1821.7 189.8 L1802.6 204.6 A2.4 2.4 0 0 0 1806.0 208.0 L1810.2 205.5 L1781.2 270.0 L1753.4 332.0 L1723.0 400.0 L1699.9 451.0 L1673.9 510.0 L1649.0 567.4 L1650.2 567.4 L1678.1 510.0 L1706.1 451.0 L1729.3 400.0 L1760.5 332.0 L1790.1 270.0 L1819.5 209.4 L1819.4 214.3 A2.5 2.5 0 0 0 1824.4 214.3 Z" fill="url(#ag)"/></svg>
</body></html>
